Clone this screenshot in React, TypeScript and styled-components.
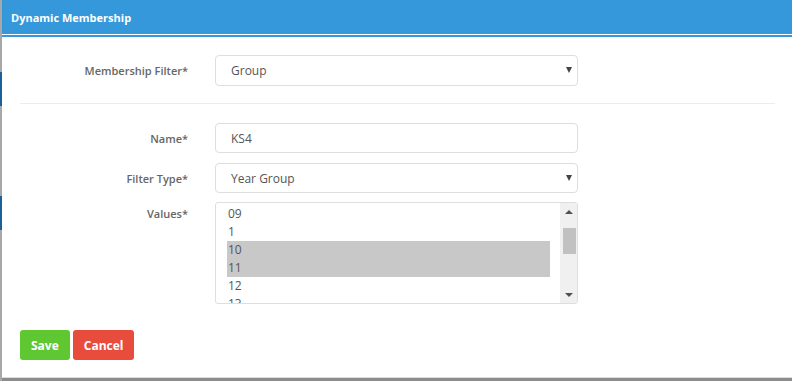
import React from "react";
import styled, { createGlobalStyle } from "styled-components";

const GlobalStyle = createGlobalStyle`
    html, body {
        margin: 0;
        padding: 0;
        background: #fff;
    }
    body {
        font-family: "Open Sans", "Liberation Sans", sans-serif;
        width: 792px;
        height: 381px;
        overflow: hidden;
    }
`;

const Backdrop = styled.div`
    display: flex;
    width: 792px;
    height: 381px;
    background: #8c8c8c;
`;

const PageEdge = styled.div`
    width: 2px;
    flex-shrink: 0;
    background: linear-gradient(
        to bottom,
        #a8a8a8 0 72px,
        #1c5f9a 72px 106px,
        #a8a8a8 106px 196px,
        #1c5f9a 196px 230px,
        #a8a8a8 230px
    );
`;

const Modal = styled.div`
    flex: 1;
    height: 377px;
    display: flex;
    flex-direction: column;
    background: #fff;
    border-bottom: 1px solid #dcdcdc;
`;

const Header = styled.div`
    height: 34px;
    display: flex;
    align-items: center;
    padding-left: 9px;
    background: #3498db;
    border-bottom: 1px solid #fff;
    box-shadow: 0 2px 0 #3498db;
    margin-bottom: 2px;
    color: #fff;
    font-size: 11px;
    font-weight: 700;
`;

const Body = styled.div`
    flex: 1;
    display: flex;
    flex-direction: column;
    padding: 18px 17px 0 18px;
`;

const Row = styled.div<{ $top?: boolean; $gap?: number }>`
    display: flex;
    align-items: ${(p) => (p.$top ? "flex-start" : "center")};
    margin-bottom: ${(p) => (p.$gap ?? 10)}px;
`;

const Label = styled.label<{ $top?: boolean }>`
    width: 168px;
    margin-right: 27px;
    padding-top: ${(p) => (p.$top ? "4px" : "0")};
    text-align: right;
    color: #666;
    font-size: 11px;
    font-weight: 600;
`;

const Control = styled.div<{ $tall?: boolean }>`
    position: relative;
    width: 363px;
    height: ${(p) => (p.$tall ? "31px" : "30px")};
    box-sizing: border-box;
    display: flex;
    align-items: center;
    padding-left: 15px;
    border: 1px solid #dedede;
    border-radius: 4px;
    color: #555;
    font-size: 12px;
`;

const Caret = styled.span`
    position: absolute;
    right: 5px;
    top: 11px;
    width: 0;
    height: 0;
    border-left: 3px solid transparent;
    border-right: 3px solid transparent;
    border-top: 6px solid #444;
`;

const Divider = styled.hr`
    margin: 7px 0 19px 0;
    border: 0;
    border-top: 1px solid #ececec;
`;

const ListBox = styled.div`
    width: 363px;
    height: 102px;
    box-sizing: border-box;
    display: flex;
    border: 1px solid #dedede;
    border-radius: 3px;
    overflow: hidden;
`;

const Options = styled.div`
    flex: 1;
    padding: 2px 10px 0 11px;
    overflow: hidden;
`;

const Option = styled.div<{ $selected?: boolean }>`
    height: 18px;
    line-height: 18px;
    padding-left: 1px;
    background: ${(p) => (p.$selected ? "#c8c8c8" : "transparent")};
    color: #555;
    font-size: 12px;
`;

const ScrollTrack = styled.div`
    width: 17px;
    display: flex;
    flex-direction: column;
    align-items: center;
    background: #f0f0f0;
`;

const Arrow = styled.div<{ $down?: boolean }>`
    width: 0;
    height: 0;
    margin: ${(p) => (p.$down ? "auto 0 6px" : "7px 0 0")};
    border-left: 4px solid transparent;
    border-right: 4px solid transparent;
    ${(p) => (p.$down ? "border-top: 4px solid #505050;" : "border-bottom: 4px solid #505050;")}
`;

const Thumb = styled.div`
    width: 13px;
    height: 26px;
    margin-top: 14px;
    margin-left: 2px;
    background: #c1c1c1;
`;

const Footer = styled.div`
    display: flex;
    gap: 3px;
    margin-top: 16px;
`;

const Button = styled.button<{ $variant: "save" | "cancel" }>`
    height: 30px;
    padding: 0 11px;
    border: 0;
    border-radius: 3px;
    background: ${(p) => (p.$variant === "save" ? "#5ec731" : "#e84c3d")};
    color: #fff;
    font-family: "Open Sans", "Liberation Sans", sans-serif;
    font-size: 12px;
    font-weight: 700;
`;

const values = [
    { text: "09" },
    { text: "1" },
    { text: "10", selected: true },
    { text: "11", selected: true },
    { text: "12" },
    { text: "13" },
];

export default function App() {
    return (
        <>
            <GlobalStyle />
            <Backdrop>
                <PageEdge />
                <Modal>
                    <Header>Dynamic Membership</Header>
                    <Body>
                        <Row>
                            <Label>Membership Filter*</Label>
                            <Control $tall>
                                Group
                                <Caret />
                            </Control>
                        </Row>
                        <Divider />
                        <Row>
                            <Label>Name*</Label>
                            <Control>KS4</Control>
                        </Row>
                        <Row $gap={9}>
                            <Label>Filter Type*</Label>
                            <Control>
                                Year Group
                                <Caret />
                            </Control>
                        </Row>
                        <Row $top>
                            <Label $top>Values*</Label>
                            <ListBox>
                                <Options>
                                    {values.map((v) => (
                                        <Option key={v.text} $selected={v.selected}>
                                            {v.text}
                                        </Option>
                                    ))}
                                </Options>
                                <ScrollTrack>
                                    <Arrow />
                                    <Thumb />
                                    <Arrow $down />
                                </ScrollTrack>
                            </ListBox>
                        </Row>
                        <Footer>
                            <Button $variant="save">Save</Button>
                            <Button $variant="cancel">Cancel</Button>
                        </Footer>
                    </Body>
                </Modal>
            </Backdrop>
        </>
    );
}
